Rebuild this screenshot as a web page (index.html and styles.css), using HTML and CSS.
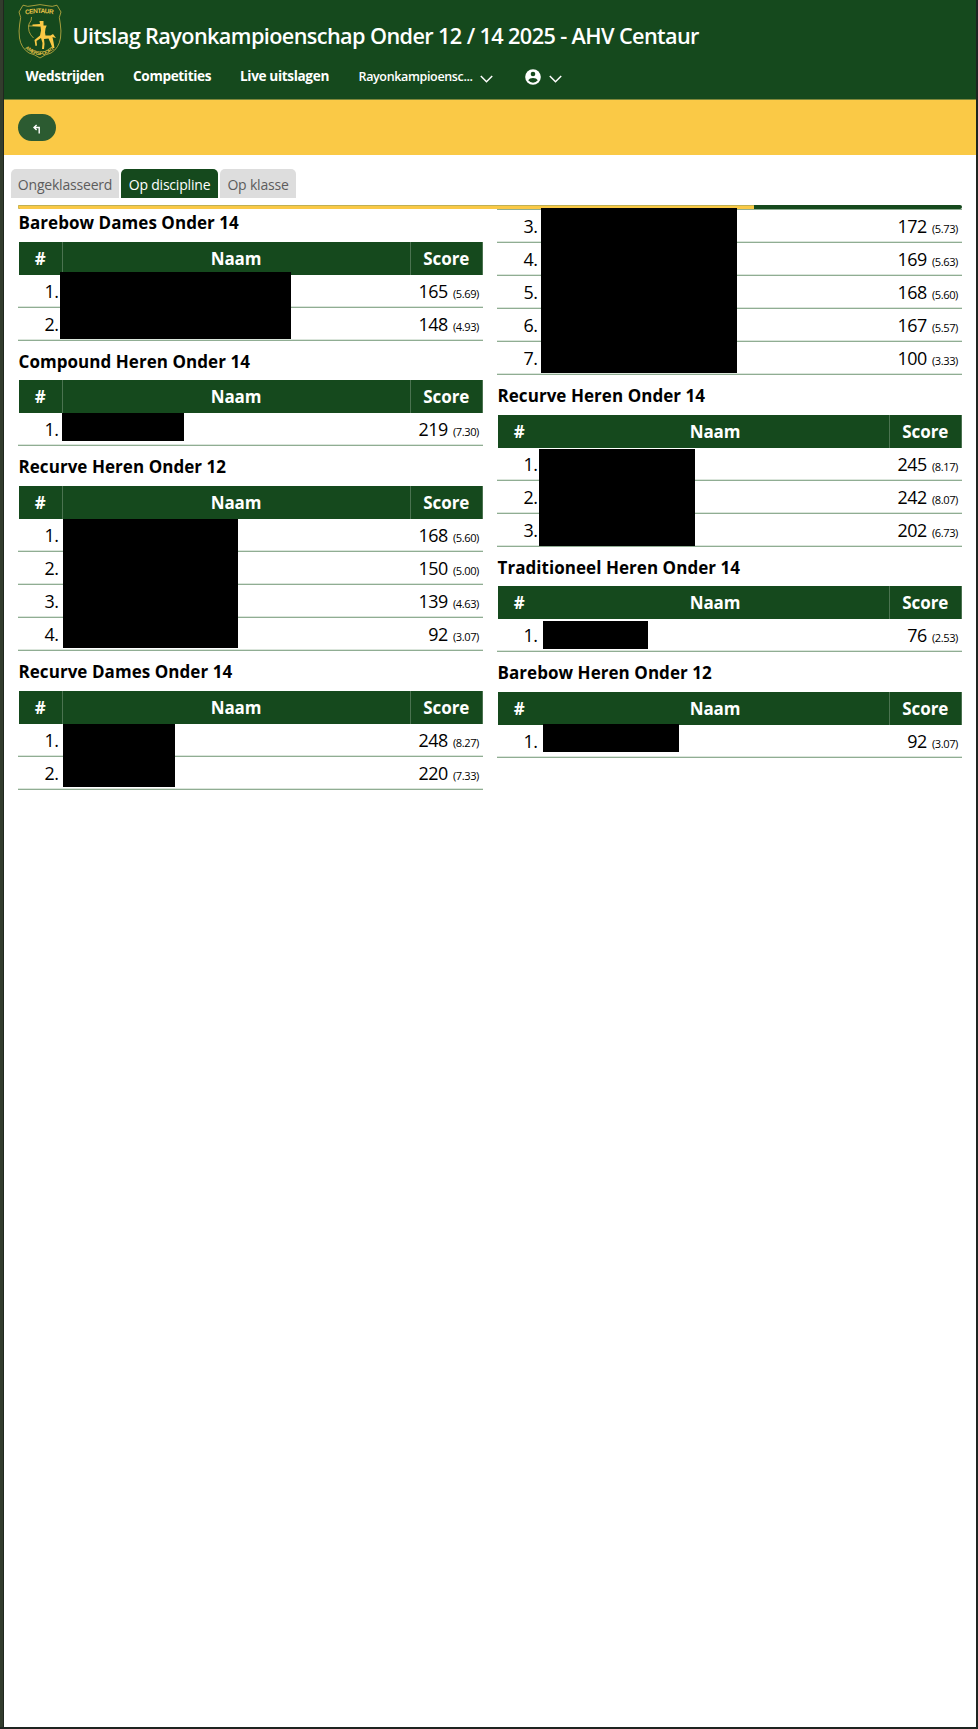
FILE: index.html
```html
<!DOCTYPE html>
<html lang="nl">
<head>
<meta charset="utf-8">
<title>Uitslag Rayonkampioenschap</title>
<link rel="stylesheet" href="styles.css">
</head>
<body>
<header class="top">
  <div class="brand">
    <svg class="logo" viewBox="0 0 44 56" fill="none" stroke="#c9b244">
      <path stroke-width=".8" d="M5 1.2Q10 3.200 14 1.800Q22-.6 30 1.800Q34 3.200 39 1.200L43 8Q40 13 42.300 20Q43.500 27 42.500 34Q41 44 33 49Q27 50.500 22 54Q17 50.500 11 49Q3 44 1.500 34Q.5 27 1.700 20Q4 13 1 8Z"/>
      <path id="arcTop" stroke="none" d="M7.500 10.500Q22 7.500 37 10.500"/>
      <path id="arcBottom" stroke="none" d="M7 44Q22 58 37.500 44"/>
      <text class="logo-name"><textPath href="#arcTop" textLength="28">CENTAUR</textPath></text>
      <text class="logo-town"><textPath href="#arcBottom" textLength="33">AMERSFOORT</textPath></text>
      <path stroke-width=".8" d="M13.500 13Q14 16 11 20Q9 28 15.500 34M10 22H22"/>
      <path fill="#fbc945" stroke="none" d="M21.500 17h4v4.500h3.200l-1.200 3-.5 4 .5 3h5l2.500-1.500 3 4-2-.5-1.500-.5 1 5 1 6h-2l-2-5-2-4.500-4.500.5.5 5-.5 5h-2l.5-6-1.500-5-4.500 3 .5 4.500-1.500.5-1-6 5.500-4.500 1-5-.5-4-8-.5v-1.500l7.500-.5z"/>
    </svg>
    <h1>Uitslag Rayonkampioenschap Onder 12 / 14 2025 - AHV Centaur</h1>
  </div>
  <nav class="nav">
    <a class="n1">Wedstrijden</a>
    <a class="n2">Competities</a>
    <a class="n3">Live uitslagen</a>
    <a class="n4">Rayonkampioensc...</a>
    <svg class="chev c1" viewBox="0 0 13 8"><path d="M.8 1L6.500 6.800L12.200 1"/></svg>
    <svg class="person" viewBox="0 0 16 16"><circle cx="8" cy="8" r="7.800" fill="#fff"/><circle cx="8" cy="5" r="2.300" fill="#15491d"/><path fill="#15491d" d="M3.200 11.300Q4.500 8.900 8 8.900T12.800 11.300Q11 13.700 8 13.700T3.200 11.300Z"/></svg>
    <svg class="chev c2" viewBox="0 0 13 8"><path d="M.8 1L6.500 6.800L12.200 1"/></svg>
  </nav>
</header>
<div class="bar"><a class="back"><svg viewBox="0 0 8 10"><path d="M1 3.500H6.200V9.500M3.600 1L1 3.500L3.600 6"/></svg></a></div>
<div class="tabs"><a class="t1">Ongeklasseerd</a><a class="t2 active">Op discipline</a><a class="t3">Op klasse</a></div>
<div class="progress"><i></i></div>
<main class="cols" id="cols"></main>
<script src="app.js"></script>
</body>
</html>
```
FILE: styles.css
```css
* { box-sizing: border-box; }
body {
  margin: 0;
  height: 1729px;
  overflow: hidden;
  background: #fff;
  border: solid #1e2420;
  border-width: 0 2px 2px 0;
  font-family: "Open Sans", sans-serif;
  color: #000;
  box-shadow: inset 3px 0 #323c2d, inset 4px 0 #20271f;
  padding-left: 4px;
}
.top { height: 99px; background: #15491d; color: #fff; }
.brand { height: 62px; display: flex; padding: 4px 0 0 14px; }
.logo { width: 44px; height: 56px; overflow: visible; flex: none; }
.logo text { stroke: none; fill: #e5c247; font: 700 6.500px "Liberation Sans", sans-serif; }
.logo .logo-town { font-size: 5px; }
h1 { margin: 15px 0 0 10.500px; font-size: 21.700px; line-height: 34px; font-weight: 600; letter-spacing: -.62px; white-space: nowrap; }
.nav { display: flex; padding-left: 21.500px; height: 28px; line-height: 28px; font-size: 13.600px; font-weight: 700; white-space: nowrap; }
.nav a { flex: none; }
.n1 { width: 107.500px; letter-spacing: -.35px; }
.n2 { width: 107px; letter-spacing: -.35px; }
.n3 { width: 118.500px; letter-spacing: -.35px; }
.n4 { width: 121.500px; font-size: 12.500px; font-weight: 600; letter-spacing: -.35px; padding-top: 1px; }
.chev { width: 13px; height: 8px; margin-top: 13px; fill: none; stroke: #fff; stroke-width: 1.500; flex: none; }
.person { width: 16px; height: 16px; margin: 6.500px 7.500px 0 32px; flex: none; }
.bar { height: 56px; background: #fac946; border-top: 1px solid #7e873a; padding: 14px; }
.back { display: flex; align-items: center; justify-content: center; width: 38px; height: 27px; border-radius: 14px; background: #2c5b31; padding-top: 2px; }
.back svg { width: 8px; height: 10px; fill: none; stroke: #fff; stroke-width: 1.400; }
.tabs { display: flex; gap: 2px; padding: 14px 0 0 7px; }
.tabs a { height: 29px; line-height: 32px; border-radius: 5px 5px 0 0; background: #ddd; color: #5c5c5c; font-size: 14px; text-align: center; white-space: nowrap; letter-spacing: -.2px; }
.t1 { width: 108px; }
.t2 { width: 97px; }
.t3 { width: 76px; }
.tabs .active { background: #15491d; color: #fff; }
.progress { margin: 7px 14px 0; height: 4px; border-radius: 2px; background: #15491d; overflow: hidden; }
.progress i { display: block; width: 736px; height: 4px; background: #fac946; border-top: 1px solid #c0b052; }
.cols { display: grid; grid-template-columns: 465px 465px; column-gap: 14px; padding-left: 14px; align-items: start; }
.col.right { border-top: 1px solid #90ad93; }
.col.left { margin-top: -7px; }
.group { position: relative; }
.group h2 { margin: 0; height: 39.700px; padding: 9px 0 0 .5px; font-size: 17px; line-height: 24px; font-weight: 700; letter-spacing: .05px; white-space: nowrap; }
.row { display: grid; grid-template-columns: 44.500px 1fr 72.500px; height: 33px; font-size: 17.900px; line-height: 32px; letter-spacing: -.5px; border-bottom: 1px solid #90ad93; box-shadow: inset 0 -1px #dbe6dc; text-align: right; }
.row .num { padding-right: 4px; }
.row .score { padding-right: 4px; white-space: nowrap; }
.row small { font-size: 11.100px; letter-spacing: -.4px; margin-left: 1px; }
.head { line-height: 34px; background: #15491d; color: #fff; font-size: 17px; font-weight: 700; text-align: center; letter-spacing: -.1px; box-shadow: none; margin-left: 1px; grid-template-columns: 43.500px 1fr 72.500px; border: 0; }
.head span { height: 33px; border-right: 1px solid #4b7350; }
.right .head .num { border-color: transparent; }
.right .head .num, .head .num { padding: 0; }
.redact { position: absolute; background: #000; z-index: 1; }
```
FILE: app.js
```javascript
// Mask: [left, top, width, height], relative to its group.
const left = [
  { title: 'Barebow Dames Onder 14', rows: ['165 5.69', '148 4.93'], mask: [42, 70.3, 231, 66.5] },
  { title: 'Compound Heren Onder 14', rows: ['219 7.30'], mask: [44, 72, 122, 28.5] },
  { title: 'Recurve Heren Onder 12', rows: ['168 5.60', '150 5.00', '139 4.63', '92 3.07'], mask: [45, 72.500, 175, 129] },
  { title: 'Recurve Dames Onder 14', rows: ['248 8.27', '220 7.33'], mask: [45, 73, 112, 62.5] }
];
const right = [
  { start: 3, rows: ['172 5.73', '169 5.63', '168 5.60', '167 5.57', '100 3.33'], mask: [44, -2.5, 196, 165.5] },
  { title: 'Recurve Heren Onder 14', rows: ['245 8.17', '242 8.07', '202 6.73'], mask: [42, 73.5, 156, 97] },
  { title: 'Traditioneel Heren Onder 14', rows: ['76 2.53'], mask: [46, 74.500, 105, 28] },
  { title: 'Barebow Heren Onder 12', rows: ['92 3.07'], mask: [46, 71.5, 136, 28.5] }
];
function group(g) {
  let html = '<section class="group">';
  if (g.title) {
    html += `<h2>${g.title}</h2><div class="row head"><span class="num">#</span><span>Naam</span><span>Score</span></div>`;
  }
  g.rows.forEach((r, i) => {
    const [total, avg] = r.split(' ');
    html += `<div class="row"><span class="num">${i + (g.start || 1)}.</span><span></span><span class="score">${total} <small>(${avg})</small></span></div>`;
  });
  const [x, y, w, h] = g.mask;
  return html + `<div class="redact" style="left:${x}px;top:${y}px;width:${w}px;height:${h}px"></div></section>`;
}
document.getElementById('cols').innerHTML =
  `<div class="col left">${left.map(group).join('')}</div><div class="col right">${right.map(group).join('')}</div>`;
```
